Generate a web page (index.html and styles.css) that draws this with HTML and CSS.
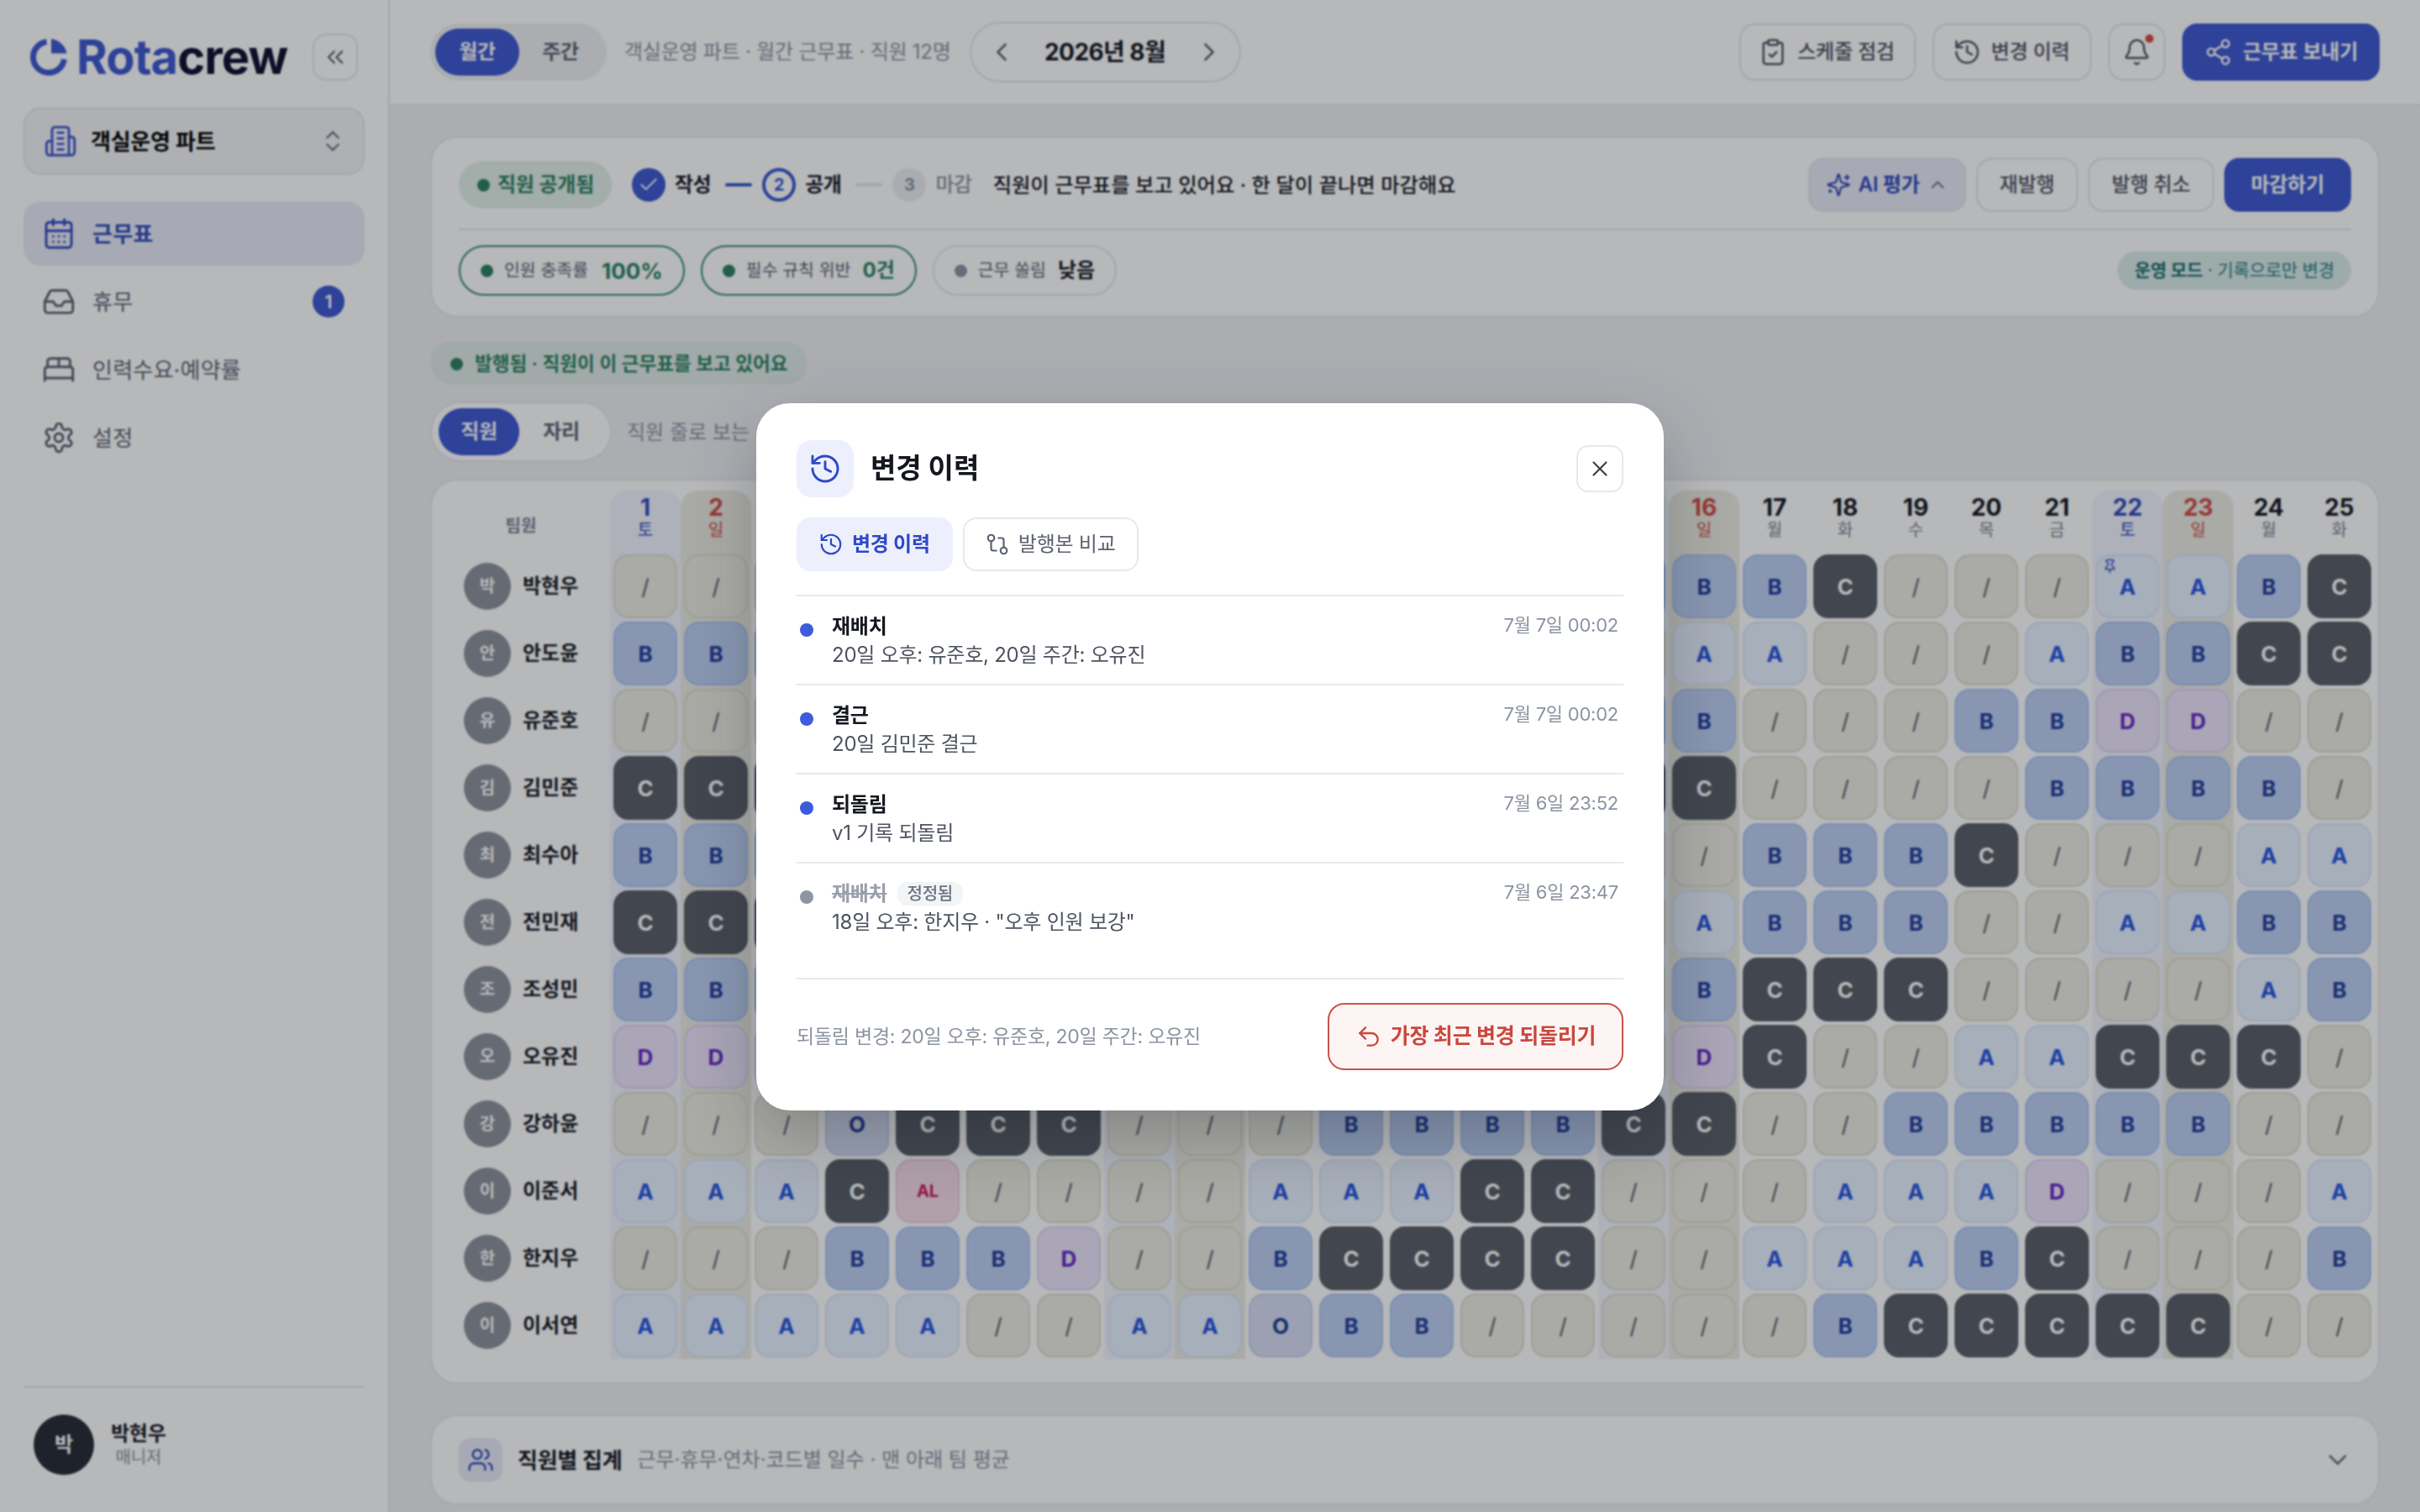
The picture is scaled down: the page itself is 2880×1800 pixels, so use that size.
FILE: index.html
```html
<!DOCTYPE html>
<html lang="ko">
<head>
    <meta charset="UTF-8">
    <title>Rotacrew</title>
    <link rel="stylesheet" href="styles.css">
</head>
<body>
<svg class="sprite" aria-hidden="true">
    <symbol id="i-history" viewBox="0 0 24 24"><path d="M3 12a9 9 0 1 0 9-9 9.75 9.75 0 0 0-6.74 2.74L3 8"/><path d="M3 3v5h5"/><path d="M12 7v5l4 2"/></symbol>
    <symbol id="i-clipboard" viewBox="0 0 24 24"><rect x="8" y="2" width="8" height="4" rx="1"/><path d="M16 4h2a2 2 0 0 1 2 2v14a2 2 0 0 1-2 2H6a2 2 0 0 1-2-2V6a2 2 0 0 1 2-2h2"/><path d="m9 14 2 2 4-4"/></symbol>
    <symbol id="i-bell" viewBox="0 0 24 24"><path d="M10.27 21a2 2 0 0 0 3.46 0"/><path d="M3.26 15.33A1 1 0 0 0 4 17h16a1 1 0 0 0 .74-1.67C19.41 13.96 18 12.5 18 8A6 6 0 0 0 6 8c0 4.5-1.41 5.96-2.74 7.33"/></symbol>
    <symbol id="i-share" viewBox="0 0 24 24"><circle cx="18" cy="5" r="3"/><circle cx="6" cy="12" r="3"/><circle cx="18" cy="19" r="3"/><path d="m8.59 13.51 6.83 3.98"/><path d="m15.41 6.51-6.82 3.98"/></symbol>
    <symbol id="i-sparkles" viewBox="0 0 24 24"><path d="M9.94 15.5A2 2 0 0 0 8.5 14.06l-6.14-1.58a.5.5 0 0 1 0-.96l6.14-1.59A2 2 0 0 0 9.94 8.5l1.58-6.14a.5.5 0 0 1 .96 0l1.58 6.14a2 2 0 0 0 1.44 1.44l6.14 1.58a.5.5 0 0 1 0 .96l-6.14 1.59a2 2 0 0 0-1.44 1.43l-1.58 6.14a.5.5 0 0 1-.96 0z"/><path d="M20 3v4"/><path d="M22 5h-4"/><path d="M4 17v2"/><path d="M5 18H3"/></symbol>
    <symbol id="i-up" viewBox="0 0 24 24"><path d="m18 15-6-6-6 6"/></symbol>
    <symbol id="i-down" viewBox="0 0 24 24"><path d="m6 9 6 6 6-6"/></symbol>
    <symbol id="i-left" viewBox="0 0 24 24"><path d="m15 18-6-6 6-6"/></symbol>
    <symbol id="i-right" viewBox="0 0 24 24"><path d="m9 18 6-6-6-6"/></symbol>
    <symbol id="i-chevrons-left" viewBox="0 0 24 24"><path d="m11 17-5-5 5-5"/><path d="m18 17-5-5 5-5"/></symbol>
    <symbol id="i-updown" viewBox="0 0 24 24"><path d="m7 15 5 5 5-5"/><path d="m7 9 5-5 5 5"/></symbol>
    <symbol id="i-building" viewBox="0 0 24 24"><path d="M6 22V4a2 2 0 0 1 2-2h8a2 2 0 0 1 2 2v18Z"/><path d="M6 12H4a2 2 0 0 0-2 2v6a2 2 0 0 0 2 2h2"/><path d="M18 9h2a2 2 0 0 1 2 2v9a2 2 0 0 1-2 2h-2"/><path d="M10 6h4"/><path d="M10 10h4"/><path d="M10 14h4"/><path d="M10 18h4"/></symbol>
    <symbol id="i-calendar" viewBox="0 0 24 24"><path d="M8 2v4"/><path d="M16 2v4"/><rect x="3" y="4" width="18" height="18" rx="2"/><path d="M3 10h18"/><path d="M8 14h.01"/><path d="M12 14h.01"/><path d="M16 14h.01"/><path d="M8 18h.01"/><path d="M12 18h.01"/><path d="M16 18h.01"/></symbol>
    <symbol id="i-inbox" viewBox="0 0 24 24"><path d="M22 12h-6l-2 3h-4l-2-3H2"/><path d="M5.45 5.11 2 12v6a2 2 0 0 0 2 2h16a2 2 0 0 0 2-2v-6l-3.45-6.89A2 2 0 0 0 16.76 4H7.24a2 2 0 0 0-1.79 1.11z"/></symbol>
    <symbol id="i-bed" viewBox="0 0 24 24"><path d="M2 20v-8a2 2 0 0 1 2-2h16a2 2 0 0 1 2 2v8"/><path d="M4 10V6a2 2 0 0 1 2-2h12a2 2 0 0 1 2 2v4"/><path d="M12 4v6"/><path d="M2 18h20"/></symbol>
    <symbol id="i-gear" viewBox="0 0 24 24"><path d="M12.22 2h-.44a2 2 0 0 0-2 2v.18a2 2 0 0 1-1 1.73l-.43.25a2 2 0 0 1-2 0l-.15-.08a2 2 0 0 0-2.73.73l-.22.38a2 2 0 0 0 .73 2.73l.15.1a2 2 0 0 1 1 1.72v.51a2 2 0 0 1-1 1.74l-.15.09a2 2 0 0 0-.73 2.73l.22.38a2 2 0 0 0 2.73.73l.15-.08a2 2 0 0 1 2 0l.43.25a2 2 0 0 1 1 1.73V20a2 2 0 0 0 2 2h.44a2 2 0 0 0 2-2v-.18a2 2 0 0 1 1-1.73l.43-.25a2 2 0 0 1 2 0l.15.08a2 2 0 0 0 2.73-.73l.22-.39a2 2 0 0 0-.73-2.73l-.15-.08a2 2 0 0 1-1-1.74v-.5a2 2 0 0 1 1-1.74l.15-.09a2 2 0 0 0 .73-2.73l-.22-.38a2 2 0 0 0-2.73-.73l-.15.08a2 2 0 0 1-2 0l-.43-.25a2 2 0 0 1-1-1.73V4a2 2 0 0 0-2-2z"/><circle cx="12" cy="12" r="3"/></symbol>
    <symbol id="i-check" viewBox="0 0 24 24"><path d="M20 6 9 17l-5-5"/></symbol>
    <symbol id="i-close" viewBox="0 0 24 24"><path d="M18 6 6 18"/><path d="m6 6 12 12"/></symbol>
    <symbol id="i-compare" viewBox="0 0 24 24"><circle cx="18" cy="18" r="3"/><circle cx="6" cy="6" r="3"/><path d="M13 6h3a2 2 0 0 1 2 2v7"/><path d="M11 18H8a2 2 0 0 1-2-2V9"/></symbol>
    <symbol id="i-undo" viewBox="0 0 24 24"><path d="M9 14 4 9l5-5"/><path d="M4 9h10.5a5.5 5.5 0 0 1 5.5 5.5a5.5 5.5 0 0 1-5.5 5.5H11"/></symbol>
    <symbol id="i-users" viewBox="0 0 24 24"><path d="M16 21v-2a4 4 0 0 0-4-4H6a4 4 0 0 0-4 4v2"/><circle cx="9" cy="7" r="4"/><path d="M22 21v-2a4 4 0 0 0-3-3.87"/><path d="M16 3.13a4 4 0 0 1 0 7.75"/></symbol>
    <symbol id="i-pin" viewBox="0 0 24 24"><path d="M12 17v5"/><path d="M9 10.76a2 2 0 0 1-1.11 1.79l-1.78.9A2 2 0 0 0 5 15.24V16a1 1 0 0 0 1 1h12a1 1 0 0 0 1-1v-.76a2 2 0 0 0-1.11-1.79l-1.78-.9A2 2 0 0 1 15 10.76V7a1 1 0 0 1 1-1 2 2 0 0 0 0-4H8a2 2 0 0 0 0 4 1 1 0 0 1 1 1z"/></symbol>
</svg>

<div class="app">
    <aside class="sidebar">
        <div class="brand">
            <svg class="logo-mark" viewBox="0 0 44 44"><path d="M19.5 3.7A18.5 18.5 0 1 0 40.3 24.5" fill="none" stroke="currentColor" stroke-width="7"/><path d="M25 .2A22 22 0 0 1 43.6 17.5H25z" fill="currentColor"/></svg>
            <span class="logo-text"><span class="logo-blue">Rota</span>crew</span>
            <button class="collapse"><svg class="icon icon-32"><use href="#i-chevrons-left"/></svg></button>
        </div>
        <button class="org">
            <svg class="icon icon-40 blue"><use href="#i-building"/></svg>
            <span class="org-name">객실운영 파트</span>
            <svg class="icon icon-32 muted"><use href="#i-updown"/></svg>
        </button>
        <nav class="nav">
            <a class="nav-item active"><svg class="icon icon-40"><use href="#i-calendar"/></svg>근무표</a>
            <a class="nav-item"><svg class="icon icon-40"><use href="#i-inbox"/></svg>휴무<span class="nav-badge">1</span></a>
            <a class="nav-item"><svg class="icon icon-40"><use href="#i-bed"/></svg>인력수요·예약률</a>
            <a class="nav-item"><svg class="icon icon-40"><use href="#i-gear"/></svg>설정</a>
        </nav>
        <div class="user">
            <span class="user-avatar">박</span>
            <div class="user-text">
                <div class="user-name">박현우</div>
                <div class="user-role">매니저</div>
            </div>
        </div>
    </aside>

    <main class="main">
        <header class="topbar">
            <div class="segment">
                <span class="segment-btn on">월간</span>
                <span class="segment-btn">주간</span>
            </div>
            <span class="topbar-sub">객실운영 파트 · 월간 근무표 · 직원 12명</span>
            <div class="month-nav">
                <svg class="icon icon-36"><use href="#i-left"/></svg>
                <strong>2026년 8월</strong>
                <svg class="icon icon-36"><use href="#i-right"/></svg>
            </div>
            <div class="topbar-actions">
                <button class="btn btn-check"><svg class="icon icon-34"><use href="#i-clipboard"/></svg>스케줄 점검</button>
                <button class="btn"><svg class="icon icon-34"><use href="#i-history"/></svg>변경 이력</button>
                <button class="btn btn-bell"><svg class="icon icon-34"><use href="#i-bell"/></svg><span class="bell-dot"></span></button>
                <button class="btn btn-primary"><svg class="icon icon-34"><use href="#i-share"/></svg>근무표 보내기</button>
            </div>
        </header>

        <div class="content">
            <section class="card status">
                <div class="status-top">
                    <span class="state-pill"><i class="dot"></i>직원 공개됨</span>
                    <div class="steps">
                        <span class="step-circle done"><svg class="icon icon-26"><use href="#i-check"/></svg></span>
                        <span class="step-label">작성</span>
                        <span class="step-line"></span>
                        <span class="step-circle current">2</span>
                        <span class="step-label">공개</span>
                        <span class="step-line idle"></span>
                        <span class="step-circle idle">3</span>
                        <span class="step-label idle">마감</span>
                    </div>
                    <span class="status-msg">직원이 근무표를 보고 있어요 · 한 달이 끝나면 마감해요</span>
                    <div class="status-actions">
                        <button class="btn-sm btn-ai"><svg class="icon icon-30"><use href="#i-sparkles"/></svg>AI 평가<svg class="icon icon-26 ai-caret"><use href="#i-up"/></svg></button>
                        <button class="btn-sm">재발행</button>
                        <button class="btn-sm">발행 취소</button>
                        <button class="btn-sm btn-close-month">마감하기</button>
                    </div>
                </div>
                <div class="status-bottom">
                    <span class="chip good"><i class="dot"></i>인원 충족률<b class="big">100%</b></span>
                    <span class="chip good"><i class="dot"></i>필수 규칙 위반<b>0건</b></span>
                    <span class="chip"><i class="dot"></i>근무 쏠림<b>낮음</b></span>
                    <span class="mode-pill"><b>운영 모드</b> · 기록으로만 변경</span>
                </div>
            </section>

            <div class="publish-note"><i class="dot"></i>발행됨 · 직원이 이 근무표를 보고 있어요</div>

            <div class="view-row">
                <div class="segment segment-view">
                    <span class="segment-btn on">직원</span>
                    <span class="segment-btn">자리</span>
                </div>
                <span class="view-hint">직원 줄로 보는</span>
            </div>

            <section class="card roster">
                <table class="grid">
                    <thead>
                        <tr>
                            <th class="team-head">팀원</th>
                            <th><b>1</b><span>토</span></th><th><b>2</b><span>일</span></th><th></th><th></th><th></th><th></th><th></th>
                            <th></th><th></th><th></th><th></th><th></th><th></th><th></th>
                            <th></th><th><b>16</b><span>일</span></th><th><b>17</b><span>월</span></th><th><b>18</b><span>화</span></th><th><b>19</b><span>수</span></th><th><b>20</b><span>목</span></th><th><b>21</b><span>금</span></th>
                            <th><b>22</b><span>토</span></th><th><b>23</b><span>일</span></th><th><b>24</b><span>월</span></th><th><b>25</b><span>화</span></th>
                        </tr>
                    </thead>
                    <tbody>
                        <tr><td><div class="member"><span class="avatar">박</span>박현우</div></td><td><b class="off">/</b></td><td><b class="off">/</b></td><td><b class="off"></b></td><td><b class="off"></b></td><td><b class="a"></b></td><td><b class="a"></b></td><td><b class="a"></b></td><td><b class="off"></b></td><td><b class="off"></b></td><td><b class="b"></b></td><td><b class="b"></b></td><td><b class="c"></b></td><td><b class="c"></b></td><td><b class="off"></b></td><td><b class="b"></b></td><td><b class="b">B</b></td><td><b class="b">B</b></td><td><b class="c">C</b></td><td><b class="off">/</b></td><td><b class="off">/</b></td><td><b class="off">/</b></td><td><b class="a"><svg class="icon pin"><use href="#i-pin"/></svg>A</b></td><td><b class="a">A</b></td><td><b class="b">B</b></td><td><b class="c">C</b></td></tr>
                        <tr><td><div class="member"><span class="avatar">안</span>안도윤</div></td><td><b class="b">B</b></td><td><b class="b">B</b></td><td><b class="b"></b></td><td><b class="off"></b></td><td><b class="off"></b></td><td><b class="a"></b></td><td><b class="a"></b></td><td><b class="a"></b></td><td><b class="off"></b></td><td><b class="off"></b></td><td><b class="c"></b></td><td><b class="c"></b></td><td><b class="off"></b></td><td><b class="off"></b></td><td><b class="off"></b></td><td><b class="a">A</b></td><td><b class="a">A</b></td><td><b class="off">/</b></td><td><b class="off">/</b></td><td><b class="off">/</b></td><td><b class="a">A</b></td><td><b class="b">B</b></td><td><b class="b">B</b></td><td><b class="c">C</b></td><td><b class="c">C</b></td></tr>
                        <tr><td><div class="member"><span class="avatar">유</span>유준호</div></td><td><b class="off">/</b></td><td><b class="off">/</b></td><td><b class="off"></b></td><td><b class="b"></b></td><td><b class="b"></b></td><td><b class="off"></b></td><td><b class="off"></b></td><td><b class="a"></b></td><td><b class="a"></b></td><td><b class="off"></b></td><td><b class="off"></b></td><td><b class="off"></b></td><td><b class="b"></b></td><td><b class="b"></b></td><td><b class="b"></b></td><td><b class="b">B</b></td><td><b class="off">/</b></td><td><b class="off">/</b></td><td><b class="off">/</b></td><td><b class="b">B</b></td><td><b class="b">B</b></td><td><b class="d">D</b></td><td><b class="d">D</b></td><td><b class="off">/</b></td><td><b class="off">/</b></td></tr>
                        <tr><td><div class="member"><span class="avatar">김</span>김민준</div></td><td><b class="c">C</b></td><td><b class="c">C</b></td><td><b class="c"></b></td><td><b class="off"></b></td><td><b class="off"></b></td><td><b class="b"></b></td><td><b class="b"></b></td><td><b class="off"></b></td><td><b class="off"></b></td><td><b class="a"></b></td><td><b class="a"></b></td><td><b class="off"></b></td><td><b class="c"></b></td><td><b class="c"></b></td><td><b class="c"></b></td><td><b class="c">C</b></td><td><b class="off">/</b></td><td><b class="off">/</b></td><td><b class="off">/</b></td><td><b class="off">/</b></td><td><b class="b">B</b></td><td><b class="b">B</b></td><td><b class="b">B</b></td><td><b class="b">B</b></td><td><b class="off">/</b></td></tr>
                        <tr><td><div class="member"><span class="avatar">최</span>최수아</div></td><td><b class="b">B</b></td><td><b class="b">B</b></td><td><b class="b"></b></td><td><b class="off"></b></td><td><b class="off"></b></td><td><b class="c"></b></td><td><b class="c"></b></td><td><b class="off"></b></td><td><b class="off"></b></td><td><b class="d"></b></td><td><b class="d"></b></td><td><b class="off"></b></td><td><b class="off"></b></td><td><b class="off"></b></td><td><b class="off"></b></td><td><b class="off">/</b></td><td><b class="b">B</b></td><td><b class="b">B</b></td><td><b class="b">B</b></td><td><b class="c">C</b></td><td><b class="off">/</b></td><td><b class="off">/</b></td><td><b class="off">/</b></td><td><b class="a">A</b></td><td><b class="a">A</b></td></tr>
                        <tr><td><div class="member"><span class="avatar">전</span>전민재</div></td><td><b class="c">C</b></td><td><b class="c">C</b></td><td><b class="c"></b></td><td><b class="off"></b></td><td><b class="off"></b></td><td><b class="a"></b></td><td><b class="a"></b></td><td><b class="a"></b></td><td><b class="off"></b></td><td><b class="off"></b></td><td><b class="b"></b></td><td><b class="b"></b></td><td><b class="off"></b></td><td><b class="off"></b></td><td><b class="off"></b></td><td><b class="a">A</b></td><td><b class="b">B</b></td><td><b class="b">B</b></td><td><b class="b">B</b></td><td><b class="off">/</b></td><td><b class="off">/</b></td><td><b class="a">A</b></td><td><b class="a">A</b></td><td><b class="b">B</b></td><td><b class="b">B</b></td></tr>
                        <tr><td><div class="member"><span class="avatar">조</span>조성민</div></td><td><b class="b">B</b></td><td><b class="b">B</b></td><td><b class="b"></b></td><td><b class="c"></b></td><td><b class="c"></b></td><td><b class="off"></b></td><td><b class="off"></b></td><td><b class="off"></b></td><td><b class="a"></b></td><td><b class="a"></b></td><td><b class="off"></b></td><td><b class="off"></b></td><td><b class="off"></b></td><td><b class="off"></b></td><td><b class="off"></b></td><td><b class="b">B</b></td><td><b class="c">C</b></td><td><b class="c">C</b></td><td><b class="c">C</b></td><td><b class="off">/</b></td><td><b class="off">/</b></td><td><b class="off">/</b></td><td><b class="off">/</b></td><td><b class="a">A</b></td><td><b class="b">B</b></td></tr>
                        <tr><td><div class="member"><span class="avatar">오</span>오유진</div></td><td><b class="d">D</b></td><td><b class="d">D</b></td><td><b class="d"></b></td><td><b class="off"></b></td><td><b class="off"></b></td><td><b class="b"></b></td><td><b class="b"></b></td><td><b class="off"></b></td><td><b class="c"></b></td><td><b class="c"></b></td><td><b class="off"></b></td><td><b class="off"></b></td><td><b class="off"></b></td><td><b class="off"></b></td><td><b class="off"></b></td><td><b class="d">D</b></td><td><b class="c">C</b></td><td><b class="off">/</b></td><td><b class="off">/</b></td><td><b class="a">A</b></td><td><b class="a">A</b></td><td><b class="c">C</b></td><td><b class="c">C</b></td><td><b class="c">C</b></td><td><b class="off">/</b></td></tr>
                        <tr><td><div class="member"><span class="avatar">강</span>강하윤</div></td><td><b class="off">/</b></td><td><b class="off">/</b></td><td><b class="off">/</b></td><td><b class="o">O</b></td><td><b class="c">C</b></td><td><b class="c">C</b></td><td><b class="c">C</b></td><td><b class="off">/</b></td><td><b class="off">/</b></td><td><b class="off">/</b></td><td><b class="b">B</b></td><td><b class="b">B</b></td><td><b class="b">B</b></td><td><b class="b">B</b></td><td><b class="c">C</b></td><td><b class="c">C</b></td><td><b class="off">/</b></td><td><b class="off">/</b></td><td><b class="b">B</b></td><td><b class="b">B</b></td><td><b class="b">B</b></td><td><b class="b">B</b></td><td><b class="b">B</b></td><td><b class="off">/</b></td><td><b class="off">/</b></td></tr>
                        <tr><td><div class="member"><span class="avatar">이</span>이준서</div></td><td><b class="a">A</b></td><td><b class="a">A</b></td><td><b class="a">A</b></td><td><b class="c">C</b></td><td><b class="al">AL</b></td><td><b class="off">/</b></td><td><b class="off">/</b></td><td><b class="off">/</b></td><td><b class="off">/</b></td><td><b class="a">A</b></td><td><b class="a">A</b></td><td><b class="a">A</b></td><td><b class="c">C</b></td><td><b class="c">C</b></td><td><b class="off">/</b></td><td><b class="off">/</b></td><td><b class="off">/</b></td><td><b class="a">A</b></td><td><b class="a">A</b></td><td><b class="a">A</b></td><td><b class="d">D</b></td><td><b class="off">/</b></td><td><b class="off">/</b></td><td><b class="off">/</b></td><td><b class="a">A</b></td></tr>
                        <tr><td><div class="member"><span class="avatar">한</span>한지우</div></td><td><b class="off">/</b></td><td><b class="off">/</b></td><td><b class="off">/</b></td><td><b class="b">B</b></td><td><b class="b">B</b></td><td><b class="b">B</b></td><td><b class="d">D</b></td><td><b class="off">/</b></td><td><b class="off">/</b></td><td><b class="b">B</b></td><td><b class="c">C</b></td><td><b class="c">C</b></td><td><b class="c">C</b></td><td><b class="c">C</b></td><td><b class="off">/</b></td><td><b class="off">/</b></td><td><b class="a">A</b></td><td><b class="a">A</b></td><td><b class="a">A</b></td><td><b class="b">B</b></td><td><b class="c">C</b></td><td><b class="off">/</b></td><td><b class="off">/</b></td><td><b class="off">/</b></td><td><b class="b">B</b></td></tr>
                        <tr><td><div class="member"><span class="avatar">이</span>이서연</div></td><td><b class="a">A</b></td><td><b class="a">A</b></td><td><b class="a">A</b></td><td><b class="a">A</b></td><td><b class="a">A</b></td><td><b class="off">/</b></td><td><b class="off">/</b></td><td><b class="a">A</b></td><td><b class="a">A</b></td><td><b class="o">O</b></td><td><b class="b">B</b></td><td><b class="b">B</b></td><td><b class="off">/</b></td><td><b class="off">/</b></td><td><b class="off">/</b></td><td><b class="off">/</b></td><td><b class="off">/</b></td><td><b class="b">B</b></td><td><b class="c">C</b></td><td><b class="c">C</b></td><td><b class="c">C</b></td><td><b class="c">C</b></td><td><b class="c">C</b></td><td><b class="off">/</b></td><td><b class="off">/</b></td></tr>
                    </tbody>
                </table>
            </section>

            <section class="card summary">
                <span class="summary-icon"><svg class="icon icon-32"><use href="#i-users"/></svg></span>
                <strong class="summary-title">직원별 집계</strong>
                <span class="summary-sub">근무·휴무·연차·코드별 일수 · 맨 아래 팀 평균</span>
                <svg class="icon icon-36 summary-caret"><use href="#i-down"/></svg>
            </section>
        </div>
    </main>
</div>

<div class="overlay">
    <div class="modal">
        <div class="modal-head">
            <span class="modal-icon"><svg class="icon icon-40"><use href="#i-history"/></svg></span>
            <h2>변경 이력</h2>
            <button class="modal-close"><svg class="icon icon-30"><use href="#i-close"/></svg></button>
        </div>
        <div class="modal-tabs">
            <button class="tab on"><svg class="icon icon-30"><use href="#i-history"/></svg>변경 이력</button>
            <button class="tab"><svg class="icon icon-30"><use href="#i-compare"/></svg>발행본 비교</button>
        </div>
        <ul class="log">
            <li class="log-row">
                <i class="log-dot"></i>
                <div class="log-body">
                    <div class="log-title">재배치</div>
                    <div class="log-desc">20일 오후: 유준호, 20일 주간: 오유진</div>
                </div>
                <time>7월 7일 00:02</time>
            </li>
            <li class="log-row">
                <i class="log-dot"></i>
                <div class="log-body">
                    <div class="log-title">결근</div>
                    <div class="log-desc">20일 김민준 결근</div>
                </div>
                <time>7월 7일 00:02</time>
            </li>
            <li class="log-row">
                <i class="log-dot"></i>
                <div class="log-body">
                    <div class="log-title">되돌림</div>
                    <div class="log-desc">v1 기록 되돌림</div>
                </div>
                <time>7월 6일 23:52</time>
            </li>
            <li class="log-row fixed">
                <i class="log-dot"></i>
                <div class="log-body">
                    <div class="log-title"><s>재배치</s><span class="log-badge">정정됨</span></div>
                    <div class="log-desc">18일 오후: 한지우 · "오후 인원 보강"</div>
                </div>
                <time>7월 6일 23:47</time>
            </li>
        </ul>
        <div class="modal-foot">
            <span class="foot-note">되돌림 변경: 20일 오후: 유준호, 20일 주간: 오유진</span>
            <button class="btn-undo"><svg class="icon icon-32"><use href="#i-undo"/></svg>가장 최근 변경 되돌리기</button>
        </div>
    </div>
</div>
</body>
</html>
```

FILE: styles.css
```css
* {
    box-sizing: border-box;
}

html, body {
    height: 100%;
}

body {
    margin: 0;
    overflow: hidden;
    font-family: Inter, "Noto Sans CJK KR", sans-serif;
    font-size: 24px;
    line-height: 1.5;
    letter-spacing: -0.01em;
    color: #14171f;
    background: #f0f0f3;
}

button {
    font: inherit;
    letter-spacing: inherit;
    cursor: pointer;
}

.sprite {
    display: none;
}

.icon {
    flex: none;
    display: block;
    width: 24px;
    height: 24px;
    fill: none;
    stroke: currentColor;
    stroke-width: 1.75;
    stroke-linecap: round;
    stroke-linejoin: round;
}

.icon-26 { width: 26px; height: 26px; }
.icon-28 { width: 28px; height: 28px; }
.icon-30 { width: 30px; height: 30px; }
.icon-32 { width: 32px; height: 32px; }
.icon-34 { width: 34px; height: 34px; }
.icon-36 { width: 36px; height: 36px; }
.icon-40 { width: 40px; height: 40px; }
.blue { color: #3a56cf; }
.muted { color: #6b7280; }

.app {
    display: flex;
    height: 1800px;
}

/* sidebar */
.sidebar {
    width: 464px;
    flex: none;
    display: flex;
    flex-direction: column;
    padding: 40px 28px 44px;
    background: #fff;
    border-right: 2px solid #e5e6ea;
}

.brand {
    display: flex;
    align-items: center;
    height: 56px;
    padding-left: 8px;
}

.logo-mark {
    width: 44px;
    height: 44px;
    color: #3a56cf;
    flex: none;
}

.logo-text {
    margin-left: 11px;
    font-size: 56px;
    font-weight: 700;
    letter-spacing: -0.016em;
    color: #0b0e2c;
}

.logo-blue {
    color: #3a56cf;
}

.collapse {
    margin-left: auto;
    margin-right: 8px;
    width: 54px;
    height: 56px;
    display: flex;
    align-items: center;
    justify-content: center;
    background: #fff;
    color: #5b6270;
    border: 2px solid #e5e6ea;
    border-radius: 16px;
    padding: 0;
}

.org {
    margin-top: 32px;
    width: 100%;
    height: 80px;
    display: flex;
    align-items: center;
    gap: 16px;
    padding: 0 20px 0 22px;
    background: #f3f4f6;
    border: 2px solid #e5e6ea;
    border-radius: 20px;
    text-align: left;
}

.org-name {
    flex: 1;
    font-size: 26px;
    font-weight: 600;
}

.nav {
    margin-top: 32px;
    display: flex;
    flex-direction: column;
    gap: 5px;
}

.nav-item {
    position: relative;
    height: 76px;
    display: flex;
    align-items: center;
    gap: 20px;
    padding: 0 24px 0 22px;
    border-radius: 20px;
    font-size: 26px;
    letter-spacing: 0.01em;
    color: #5b6270;
}

.nav-item.active {
    background: #e9ebf6;
    color: #2f49bb;
    font-weight: 600;
}

.nav-badge {
    margin-left: auto;
    width: 38px;
    height: 38px;
    display: flex;
    align-items: center;
    justify-content: center;
    border-radius: 50%;
    background: #3a56cf;
    color: #fff;
    font-size: 22px;
    font-weight: 600;
}

.user {
    margin-top: auto;
    display: flex;
    align-items: center;
    gap: 20px;
    padding: 32px 12px 0;
    border-top: 2px solid #e5e6ea;
}

.user-avatar {
    width: 72px;
    height: 72px;
    display: flex;
    align-items: center;
    justify-content: center;
    border-radius: 50%;
    background: #252a33;
    color: #fff;
    font-size: 24px;
    font-weight: 600;
}

.user-text {
    text-align: center;
}

.user-name {
    font-size: 24px;
    font-weight: 600;
    line-height: 30px;
}

.user-role {
    font-size: 20px;
    line-height: 26px;
    color: #8b909b;
}

/* top bar */
.main {
    flex: 1;
    min-width: 0;
    display: flex;
    flex-direction: column;
}

.topbar {
    height: 126px;
    flex: none;
    display: flex;
    align-items: center;
    padding: 0 48px;
    background: #fff;
    border-bottom: 2px solid #e5e6ea;
}

.segment {
    display: flex;
    height: 68px;
    padding: 6px;
    background: #f0f0f3;
    border-radius: 34px;
}

.segment-btn {
    width: 98px;
    display: flex;
    align-items: center;
    justify-content: center;
    border-radius: 28px;
    font-size: 24px;
    font-weight: 600;
    color: #5b6270;
}

.segment-btn.on {
    width: 100px;
    background: #3a56cf;
    color: #fff;
}

.topbar-sub {
    margin-left: 21px;
    color: #8b93a1;
}

.month-nav {
    margin-left: 22px;
    width: 323px;
    height: 72px;
    display: flex;
    align-items: center;
    justify-content: space-between;
    padding: 0 18px;
    background: #fff;
    border: 2px solid #e5e6ea;
    border-radius: 36px;
    color: #5b6270;
}

.month-nav strong {
    font-size: 28px;
    font-weight: 700;
    letter-spacing: -0.02em;
    color: #14171f;
}

.topbar-actions {
    margin-left: auto;
    display: flex;
    gap: 20px;
}

.btn {
    position: relative;
    height: 68px;
    display: flex;
    align-items: center;
    gap: 12px;
    padding: 0 24px 0 22px;
    background: #fff;
    color: #4d5360;
    border: 2px solid #e5e6ea;
    border-radius: 18px;
    font-weight: 500;
}

.btn-check {
    padding: 0 23px 0 21px;
}

.btn-bell {
    width: 68px;
    padding: 0;
    justify-content: center;
}

.bell-dot {
    position: absolute;
    top: 11px;
    right: 12px;
    width: 10px;
    height: 10px;
    border-radius: 50%;
    background: #d84a3f;
}

.btn-primary {
    padding: 0 24px;
    background: #3a56cf;
    border-color: #3a56cf;
    color: #fff;
    font-weight: 600;
}

/* page body */
.content {
    flex: 1;
    min-height: 0;
    padding: 36px 48px 0;
    display: flex;
    flex-direction: column;
    align-items: stretch;
}

.card {
    background: #fff;
    border: 2px solid #e5e6ea;
    border-radius: 32px;
}

.dot {
    flex: none;
    width: 15px;
    height: 15px;
    border-radius: 50%;
    background: currentColor;
}

.status {
    height: 216px;
    padding: 24px 32px 0;
}

.status-top {
    height: 86px;
    display: flex;
    align-items: center;
    border-bottom: 2px solid #e5e6ea;
    padding-bottom: 20px;
}

.state-pill {
    height: 56px;
    display: flex;
    align-items: center;
    gap: 9px;
    padding: 0 21px 0 22px;
    border-radius: 28px;
    background: #e3efe9;
    color: #2a8060;
    font-weight: 600;
}

.steps {
    margin-left: 24px;
    display: flex;
    align-items: center;
}

.step-circle {
    width: 40px;
    height: 40px;
    display: flex;
    align-items: center;
    justify-content: center;
    border-radius: 50%;
    font-size: 20px;
    font-weight: 700;
}

.step-circle.done {
    background: #3a56cf;
    color: #fff;
}

.step-circle.current {
    border: 4px solid #3a56cf;
    color: #3a56cf;
}

.step-circle.idle {
    background: #eceef2;
    color: #8b93a1;
}

.step-label {
    margin-left: 11px;
    font-size: 24px;
    font-weight: 600;
    letter-spacing: -0.02em;
}

.step-label.idle {
    color: #8b93a1;
    font-weight: 500;
}

.step-line {
    margin: 0 12px 0 17px;
    width: 32px;
    height: 4px;
    background: #3a56cf;
    border-radius: 2px;
}

.step-line.idle {
    background: #e5e6ea;
}

.status-msg {
    margin-left: 25px;
    font-size: 24.3px;
    font-weight: 500;
    letter-spacing: 0;
}

.status-actions {
    margin-left: auto;
    display: flex;
    gap: 12px;
}

.btn-sm {
    height: 64px;
    display: flex;
    align-items: center;
    padding: 0 26px;
    background: #fff;
    color: #4d5360;
    border: 2px solid #e5e6ea;
    border-radius: 18px;
    font-weight: 500;
}

.btn-ai {
    gap: 8px;
    padding: 0 19px;
    background: #e9ebf6;
    color: #2f49bb;
    font-weight: 600;
}

.ai-caret {
    color: #6b7280;
}

.btn-close-month {
    padding: 0 30px;
    background: #3a56cf;
    border-color: #3a56cf;
    color: #fff;
    font-weight: 600;
}

.status-bottom {
    margin-top: 18px;
    display: flex;
    align-items: center;
    gap: 19px;
}

.chip {
    height: 60px;
    display: flex;
    align-items: center;
    padding: 0 24px;
    background: #fff;
    border: 2px solid #e5e6ea;
    border-radius: 30px;
    font-size: 20.5px;
    letter-spacing: 0;
    color: #5b6270;
}

.chip .dot {
    margin-right: 13px;
    color: #8b93a1;
}

.chip b {
    margin-left: 14px;
    font-size: 24px;
    font-weight: 700;
    color: #14171f;
}

.chip b.big {
    margin-left: 16px;
    font-size: 26px;
}

.chip.good {
    border-color: #2f8a68;
}

.chip.good .dot,
.chip.good b {
    color: #2a8060;
}

.mode-pill {
    margin-left: auto;
    height: 46px;
    display: flex;
    align-items: center;
    gap: 6px;
    padding: 0 20px;
    border-radius: 23px;
    background: #dcecea;
    font-size: 21px;
    color: #2a8080;
}

.mode-pill b {
    font-weight: 700;
    color: #17706e;
}

.publish-note {
    margin-top: 28px;
    align-self: flex-start;
    height: 52px;
    display: flex;
    align-items: center;
    gap: 14px;
    padding: 2px 24px 0;
    border-radius: 26px;
    background: #e0ebe6;
    color: #2a8060;
    font-size: 22.5px;
    font-weight: 600;
    letter-spacing: 0;
}

.view-row {
    margin-top: 20px;
    display: flex;
    align-items: center;
    gap: 18px;
}

.segment-view {
    height: 72px;
    padding: 6px 8px;
    border: 2px solid #e5e6ea;
    border-radius: 36px;
    background: #fff;
}

.segment-view .segment-btn {
    width: 100px;
}

.segment-view .segment-btn.on {
    width: 96px;
}

.view-hint {
    padding-top: 2px;
    color: #8b93a1;
    letter-spacing: 0;
}

/* roster */
.roster {
    margin-top: 20px;
    height: 1078px;
    padding-top: 12px;
}

.grid {
    border-collapse: separate;
    border-spacing: 0;
    table-layout: fixed;
    width: 2312px;
    letter-spacing: 0;
}

.grid th {
    height: 74px;
    width: 84px;
    padding: 4px 0 0;
    vertical-align: top;
    font-weight: 400;
    border-radius: 20px 20px 0 0;
}

.grid th.team-head {
    width: 212px;
    padding-top: 10px;
    vertical-align: middle;
    font-size: 20px;
    font-weight: 600;
    color: #7c8390;
    border-radius: 0;
}

.grid th b {
    display: block;
    font-size: 28px;
    font-weight: 700;
    line-height: 32px;
    color: #14171f;
}

.grid th span {
    display: block;
    font-size: 20px;
    line-height: 22px;
    color: #7c8390;
}

.grid th:nth-child(7n+2) b,
.grid th:nth-child(7n+2) span {
    color: #2f49bb;
}

.grid th:nth-child(7n+3) b,
.grid th:nth-child(7n+3) span {
    color: #cf4a42;
}

.grid th:nth-child(7n+2),
.grid td:nth-child(7n+2) {
    background: #f2f5fe;
}

.grid th:nth-child(7n+3),
.grid td:nth-child(7n+3) {
    background: #edece2;
}

.grid td {
    height: 80px;
    padding: 2px 4px;
}

.grid td b {
    position: relative;
    width: 76px;
    height: 76px;
    display: flex;
    align-items: center;
    justify-content: center;
    border: 2px solid transparent;
    border-radius: 18px;
    font-size: 26px;
    font-weight: 700;
    letter-spacing: 0;
}

.off { background: #edece2; border-color: #dddccd !important; color: #6b6f7c; font-weight: 500 !important; }
.a { background: #e9f2ff; border-color: #d8e5fb !important; color: #2453e0; }
.b { background: #bccff3; border-color: #a8c3f2 !important; color: #1f3d9b; }
.c { background: #575c66; border-color: #575c66 !important; color: #fff; }
.d { background: #ece5fb; border-color: #dfd0f7 !important; color: #6525c3; }
.o { background: #d7dff5; border-color: #c5d0ee !important; color: #1b3891; }
.grid td .al { background: #f7dde9; border-color: #f0c8dd !important; color: #cf145f; font-size: 20px; }

.pin {
    position: absolute;
    top: 3px;
    left: 6px;
    width: 18px;
    height: 18px;
    stroke-width: 2;
    color: #2f49bb;
}

.member {
    display: flex;
    align-items: center;
    gap: 14px;
    padding-left: 34px;
    font-weight: 600;
}

.avatar {
    width: 56px;
    height: 56px;
    flex: none;
    display: flex;
    align-items: center;
    justify-content: center;
    border-radius: 50%;
    background: #8c909a;
    color: #fff;
    font-size: 20px;
}

.summary {
    margin-top: 36px;
    height: 108px;
    flex: none;
    display: flex;
    align-items: center;
    padding: 0 30px 0 32px;
}

.summary-icon {
    width: 52px;
    height: 52px;
    display: flex;
    align-items: center;
    justify-content: center;
    border-radius: 14px;
    background: #e9ebf6;
    color: #2f49bb;
}

.summary-title {
    margin-left: 18px;
    font-size: 26px;
    font-weight: 700;
}

.summary-sub {
    margin-left: 18px;
    color: #8b93a1;
    letter-spacing: 0;
}

.summary-caret {
    margin-left: auto;
    color: #6b7280;
}

/* change history dialog */
.overlay {
    position: fixed;
    inset: 0;
    display: flex;
    align-items: center;
    justify-content: center;
    padding-top: 2px;
    background: rgba(17, 20, 28, 0.3);
    backdrop-filter: blur(1px);
}

.modal {
    width: 1080px;
    height: 842px;
    padding: 44px 48px 48px;
    display: flex;
    flex-direction: column;
    background: #fff;
    border-radius: 40px;
    box-shadow: 0 30px 80px rgba(15, 18, 28, 0.25);
}

.modal-head {
    display: flex;
    align-items: center;
    gap: 20px;
}

.modal-head h2 {
    margin: 0;
    font-size: 33px;
    font-weight: 700;
    letter-spacing: 0;
}

.modal-icon {
    width: 68px;
    height: 68px;
    display: flex;
    align-items: center;
    justify-content: center;
    border-radius: 18px;
    background: #edf0fc;
    color: #2f49c6;
}

.modal-close {
    margin-left: auto;
    width: 56px;
    height: 56px;
    display: flex;
    align-items: center;
    justify-content: center;
    padding: 0;
    background: #fff;
    color: #3b404b;
    border: 2px solid #e8e9ee;
    border-radius: 14px;
}

.modal-tabs {
    margin-top: 24px;
    display: flex;
    gap: 12px;
}

.tab {
    height: 64px;
    display: flex;
    align-items: center;
    gap: 10px;
    padding: 0 25px 0 24px;
    background: #fff;
    color: #5b6270;
    border: 2px solid #e8e9ee;
    border-radius: 16px;
}

.tab.on {
    background: #edf0fc;
    border-color: #edf0fc;
    color: #2f49c6;
    font-weight: 700;
}

.log {
    margin: 28px 0 0;
    padding: 0;
    list-style: none;
    flex: 1;
    border-top: 2px solid #e8e9ee;
}

.log-row {
    height: 106px;
    display: flex;
    align-items: flex-start;
    padding: 20px 6px 0 4px;
    border-bottom: 2px solid #e8e9ee;
}

.log-row.fixed {
    border-bottom: 0;
}

.log-dot {
    margin-top: 12px;
    width: 16px;
    height: 16px;
    flex: none;
    border-radius: 50%;
    background: #3d5bdb;
}

.log-body {
    flex: 1;
    margin-left: 22px;
}

.log-title {
    display: flex;
    align-items: center;
    gap: 12px;
    font-weight: 700;
    line-height: 32px;
}

.log-desc {
    margin-top: 2px;
    line-height: 32px;
    color: #4d5360;
}

.log-row time {
    margin-top: -2px;
    font-size: 22px;
    line-height: 32px;
    color: #8b93a1;
}

.fixed .log-dot {
    background: #8f96a3;
}

.fixed .log-title s {
    color: #9aa0ac;
}

.log-badge {
    height: 28px;
    display: flex;
    align-items: center;
    padding: 0 12px;
    border-radius: 12px;
    background: #f3f4f6;
    color: #6b7280;
    font-size: 20px;
    font-weight: 500;
}

.modal-foot {
    display: flex;
    align-items: center;
    justify-content: space-between;
    padding-top: 28px;
    border-top: 2px solid #e8e9ee;
}

.foot-note {
    font-size: 23px;
    color: #8b93a1;
}

.btn-undo {
    width: 352px;
    height: 80px;
    display: flex;
    align-items: center;
    justify-content: center;
    gap: 10px;
    background: #fdf5f4;
    color: #c9483f;
    border: 2px solid #c9534a;
    border-radius: 20px;
    font-size: 25px;
    font-weight: 700;
}
```
